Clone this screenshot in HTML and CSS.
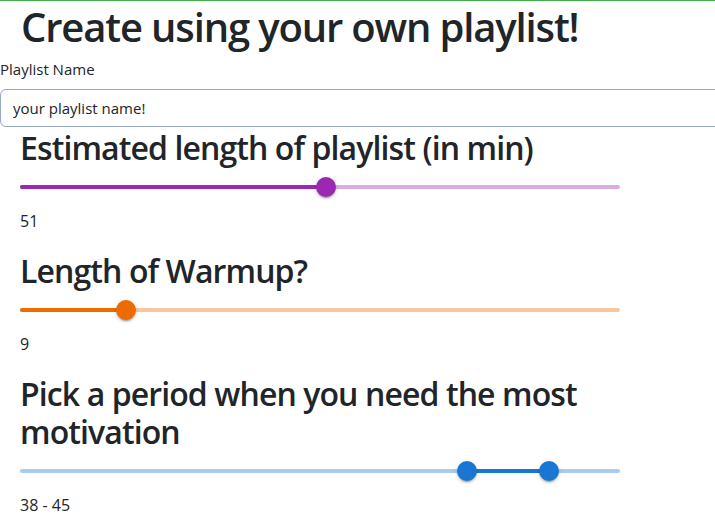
FILE: index.html
```html
<!DOCTYPE html>
<html lang="en">
<head>
<meta charset="utf-8">
<title>Create playlist</title>
<link rel="stylesheet" href="styles.css">
</head>
<body>
<div class="page">
  <h1 class="title">Create using your own playlist!</h1>
  <div class="field">
    <label class="field-label" for="pname">Playlist Name</label>
    <input class="field-input" id="pname" type="text" value="your playlist name!">
  </div>
  <div class="panel">
    <section class="block">
      <h2 class="block-title">Estimated length of playlist (in min)</h2>
      <div class="slider slider-purple">
        <div class="rail"></div>
        <div class="track" style="left:0%;width:51%"></div>
        <div class="thumb" style="left:51%"></div>
      </div>
      <p class="value">51</p>
    </section>
    <section class="block">
      <h2 class="block-title">Length of Warmup?</h2>
      <div class="slider slider-orange">
        <div class="rail"></div>
        <div class="track" style="left:0%;width:17.65%"></div>
        <div class="thumb" style="left:17.65%"></div>
      </div>
      <p class="value">9</p>
    </section>
    <section class="block">
      <h2 class="block-title">Pick a period when you need the most motivation</h2>
      <div class="slider slider-blue">
        <div class="rail"></div>
        <div class="track" style="left:74.51%;width:13.73%"></div>
        <div class="thumb" style="left:74.51%"></div>
        <div class="thumb" style="left:88.24%"></div>
      </div>
      <p class="value">38 - 45</p>
    </section>
  </div>
</div>
</body>
</html>
```

FILE: styles.css
```css
* { box-sizing: border-box; }
html, body { margin: 0; padding: 0; background: #fff; }
body {
  font-family: "Open Sans", "Noto Sans", sans-serif;
  color: #212529;
  border-top: 1px solid #3fae49;
  overflow: hidden;
}
.page { width: 715px; }
.title {
  margin: 0;
  padding: 2px 0 0 21px;
  font-size: 40px;
  line-height: 48px;
  font-weight: 600;
  letter-spacing: -1.15px;
}
.field { margin-top: 8px; }
.field-label {
  display: block;
  font-size: 15px;
  line-height: 20px;
  margin-bottom: 10px;
}
.field-input {
  display: block;
  width: 730px;
  height: 38px;
  padding: 6px 12px;
  font-family: inherit;
  font-size: 15px;
  color: #212529;
  border: 1px solid #98a8c6;
  border-radius: 6px;
  outline: none;
  background: #fff;
}
.panel {
  width: 600px;
  margin-left: 20px;
  padding-top: 2px;
}
.block-title {
  margin: 0;
  font-size: 32px;
  line-height: 38px;
  font-weight: 600;
  letter-spacing: -0.9px;
}
.slider {
  position: relative;
  height: 4px;
  margin: 18px 0 22px;
}
.rail, .track {
  position: absolute;
  top: 0;
  height: 4px;
  border-radius: 2px;
}
.rail { left: 0; width: 100%; opacity: 0.38; }
.thumb {
  position: absolute;
  top: 2px;
  width: 20px;
  height: 20px;
  margin: -10px 0 0 -10px;
  border-radius: 50%;
  box-shadow: 0 3px 1px -2px rgba(0,0,0,.2), 0 2px 2px 0 rgba(0,0,0,.14), 0 1px 5px 0 rgba(0,0,0,.12);
}
.slider-purple .rail, .slider-purple .track, .slider-purple .thumb { background: #9c27b0; }
.slider-orange .rail, .slider-orange .track, .slider-orange .thumb { background: #ed6c02; }
.slider-blue .rail, .slider-blue .track, .slider-blue .thumb { background: #1976d2; }
.value {
  margin: 0 0 21px;
  font-size: 16px;
  line-height: 20px;
  height: 20px;
}
```
